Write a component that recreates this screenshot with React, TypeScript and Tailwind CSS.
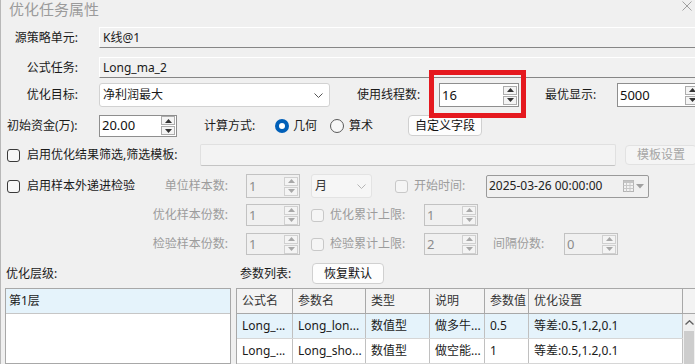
import clsx from "clsx";

const font = "font-['Noto_Sans','Noto_Sans_CJK_SC',sans-serif]";

function Tri({ up, disabled }: { up?: boolean; disabled?: boolean }) {
  return (
    <svg width="7" height="4" viewBox="0 0 7 4">
      <path
        d={up ? "M0 4 L3.5 0 L7 4 Z" : "M0 0 L3.5 4 L7 0 Z"}
        fill={disabled ? "#a8a8a8" : "#333"}
      />
    </svg>
  );
}

function Spin({
  value,
  className,
  disabled,
}: {
  value: string;
  className: string;
  disabled?: boolean;
}) {
  return (
    <div
      className={clsx(
        "flex items-center border shrink-0",
        disabled ? "border-[#c2c2c2] text-[#8c8c8c]" : "border-[#8e8e8e] bg-white text-[#111]",
        className
      )}
    >
      <span className="flex-1 pl-[2px] text-[13px] leading-none">{value}</span>
      <div className="flex flex-col gap-[1px] mr-[1px]">
        <div
          className={clsx(
            "w-[14px] h-[9px] border flex items-center justify-center",
            disabled ? "border-[#d0d0d0] bg-[#f4f4f4]" : "border-[#adadad] bg-[#f4f4f4]"
          )}
        >
          <Tri up disabled={disabled} />
        </div>
        <div
          className={clsx(
            "w-[14px] h-[9px] border flex items-center justify-center",
            disabled ? "border-[#d0d0d0] bg-[#f4f4f4]" : "border-[#adadad] bg-[#f4f4f4]"
          )}
        >
          <Tri disabled={disabled} />
        </div>
      </div>
    </div>
  );
}

function Chevron({ color }: { color: string }) {
  return (
    <svg width="9" height="5" viewBox="0 0 9 5">
      <polyline points="0.5,0.5 4.5,4.5 8.5,0.5" fill="none" stroke={color} strokeWidth="1" />
    </svg>
  );
}

function Check({ disabled }: { disabled?: boolean }) {
  return (
    <div
      className={clsx(
        "w-[13px] h-[13px] rounded-[3px] border shrink-0",
        disabled ? "border-[#c8c8c8] bg-[#f5f5f5]" : "border-[#3a3a3a] bg-[#f7f7f7]"
      )}
    />
  );
}

export default function App() {
  const cols = [
    { name: "公式名", w: "w-[56px]" },
    { name: "参数名", w: "w-[73px]" },
    { name: "类型", w: "w-[64px]" },
    { name: "说明", w: "w-[55px]" },
    { name: "参数值", w: "w-[44px]" },
    { name: "优化设置", w: "w-[154px]" },
  ];
  const rows = [
    ["Long_...", "Long_lon...", "数值型", "做多牛...", "0.5", "等差:0.5,1.2,0.1"],
    ["Long_...", "Long_sho...", "数值型", "做空能...", "1", "等差:0.5,1.2,0.1"],
  ];

  return (
    <div
      className={clsx(
        "relative w-[695px] h-[364px] overflow-hidden whitespace-nowrap bg-[#f0f0f0] border-l border-[#b8b8b8] text-[12px] text-[#1a1a1a] flex flex-col",
        font
      )}
    >
      {/* title */}
      <div className="h-[17px] flex items-center justify-between pl-[8px] pr-[3px]">
        <span className="text-[15px] text-[#9b9b9b] leading-none pt-[1px]">优化任务属性</span>
        <svg width="10" height="10" viewBox="0 0 10 10" className="-mt-[6px]">
          <path d="M0.5 0.5 L9.5 9.5 M9.5 0.5 L0.5 9.5" stroke="#a0a0a0" strokeWidth="1" />
        </svg>
      </div>

      {/* row 1 */}
      <div className="mt-[10px] h-[21px] flex items-center *:shrink-0">
        <span className="w-[77px] text-right">源策略单元:</span>
        <div className="ml-[21px] flex-1 h-full flex items-center pl-[3px] bg-[#f1f1f1] border-t border-l border-white border-b border-b-[#868686]">
          K线@1
        </div>
      </div>

      {/* row 2 */}
      <div className="mt-[9px] h-[21px] flex items-center *:shrink-0">
        <span className="w-[77px] text-right">公式任务:</span>
        <div className="ml-[21px] flex-1 h-full flex items-center pl-[3px] bg-[#f1f1f1] border-t border-l border-white border-b border-b-[#868686]">
          Long_ma_2
        </div>
      </div>

      {/* row 3 */}
      <div className="mt-[4px] h-[26px] flex items-center *:shrink-0">
        <span className="w-[77px] text-right">优化目标:</span>
        <div className="ml-[21px] w-[231px] h-[24px] flex items-center justify-between pl-[3px] pr-[6px] bg-white border border-[#d2d2d2] rounded-[3px]">
          <span>净利润最大</span>
          <Chevron color="#555" />
        </div>
        <span className="ml-[27px] w-[64px]">使用线程数:</span>
        <Spin value="16" className="ml-[18px] w-[80px] h-[24px]" />
        <span className="ml-[26px] w-[52px]">最优显示:</span>
        <Spin value="5000" className="ml-[20px] w-[84px] h-[24px]" />
      </div>

      {/* row 4 */}
      <div className="mt-[6px] h-[23px] flex items-center pl-[6px] *:shrink-0">
        <span className="w-[92px]">初始资金(万):</span>
        <Spin value="20.00" className="w-[78px] h-[22px]" />
        <span className="ml-[27px] w-[71px]">计算方式:</span>
        <div className="w-[14px] h-[14px] rounded-full bg-[#005fb8] flex items-center justify-center">
          <div className="w-[6px] h-[6px] rounded-full bg-white" />
        </div>
        <span className="ml-[4px]">几何</span>
        <div className="ml-[13px] w-[14px] h-[14px] rounded-full border border-[#5a5a5a] bg-[#f7f7f7]" />
        <span className="ml-[5px]">算术</span>
        <button className="ml-[35px] w-[74px] h-[21px] bg-[#fdfdfd] border border-[#d0d0d0] rounded-[4px] text-[12px] text-[#111] flex items-center justify-center">
          自定义字段
        </button>
      </div>

      {/* row 5 */}
      <div className="mt-[7px] h-[22px] flex items-center pl-[6px] *:shrink-0">
        <Check />
        <span className="ml-[7px] w-[173px]">启用优化结果筛选,筛选模板:</span>
        <div className="w-[416px] h-[22px] bg-[#f3f3f3] border border-[#e0e0e0] border-b-[#c4c4c4] rounded-[2px]" />
        <div className="ml-[9px] w-[72px] h-[20px] bg-[#f5f5f5] border border-[#e2e2e2] rounded-[4px] text-[#a6a6a6] flex items-center justify-center">
          模板设置
        </div>
      </div>

      {/* row 6 */}
      <div className="mt-[8px] h-[24px] flex items-center *:shrink-0">
        <div className="w-[227px] flex items-center pl-[6px]">
          <Check />
          <span className="ml-[7px]">启用样本外递进检验</span>
          <span className="ml-auto text-[#9c9c9c]">单位样本数:</span>
        </div>
        <Spin value="1" disabled className="ml-[18px] w-[54px] h-[24px]" />
        <div className="ml-[11px] w-[61px] h-[24px] flex items-center justify-between pl-[3px] pr-[5px] bg-[#f6f6f6] border border-[#e3e3e3] rounded-[3px] text-[#333]">
          <span>月</span>
          <Chevron color="#b5b5b5" />
        </div>
        <div className="ml-[23px]">
          <Check disabled />
        </div>
        <span className="ml-[6px] w-[51px] text-[#9c9c9c]">开始时间:</span>
        <div className="ml-[21px] w-[163px] h-[23px] flex items-center justify-between pl-[2px] pr-[4px] border border-[#9a9a9a] rounded-[2px] text-[#222]">
          <span>2025-03-26 00:00:00</span>
          <div className="flex items-center gap-[2px]">
            <svg width="11" height="12" viewBox="0 0 11 12">
              <rect x="0.5" y="0.5" width="10" height="11" fill="#f2f2f2" stroke="#b4b4b4" />
              <rect x="0.5" y="0.5" width="10" height="2.5" fill="#c4c4c4" />
              <path d="M0.5 5.5 H10.5 M0.5 8.5 H10.5 M3.5 3 V11.5 M7 3 V11.5" stroke="#c8c8c8" strokeWidth="1" />
            </svg>
            <svg width="8" height="5" viewBox="0 0 8 5">
              <path d="M0 0 L4 4.5 L8 0 Z" fill="#a0a0a0" />
            </svg>
          </div>
        </div>
      </div>

      {/* row 7 */}
      <div className="mt-[6px] h-[22px] flex items-center *:shrink-0">
        <div className="w-[227px] flex justify-end text-[#9c9c9c]">优化样本份数:</div>
        <Spin value="1" disabled className="ml-[18px] w-[54px] h-[22px]" />
        <div className="ml-[11px]">
          <Check disabled />
        </div>
        <span className="ml-[6px] w-[75px] text-[#9c9c9c]">优化累计上限:</span>
        <Spin value="1" disabled className="ml-[19px] w-[54px] h-[22px]" />
      </div>

      {/* row 8 */}
      <div className="mt-[7px] h-[22px] flex items-center *:shrink-0">
        <div className="w-[227px] flex justify-end text-[#9c9c9c]">检验样本份数:</div>
        <Spin value="1" disabled className="ml-[18px] w-[54px] h-[22px]" />
        <div className="ml-[11px]">
          <Check disabled />
        </div>
        <span className="ml-[6px] w-[75px] text-[#9c9c9c]">检验累计上限:</span>
        <Spin value="2" disabled className="ml-[19px] w-[54px] h-[22px]" />
        <span className="ml-[15px] w-[51px] text-[#9c9c9c]">间隔份数:</span>
        <Spin value="0" disabled className="ml-[20px] w-[54px] h-[22px]" />
      </div>

      {/* lower labels */}
      <div className="mt-[8px] h-[21px] flex items-center pl-[5px] *:shrink-0">
        <span className="w-[234px]">优化层级:</span>
        <span className="w-[51px]">参数列表:</span>
        <button className="ml-[21px] w-[72px] h-[21px] bg-[#fdfdfd] border border-[#d0d0d0] rounded-[4px] text-[12px] text-[#111] flex items-center justify-center">
          恢复默认
        </button>
      </div>

      {/* lower panels */}
      <div className="mt-[4px] flex-1 flex min-h-0">
        <div className="ml-[4px] w-[226px] shrink-0 bg-white border border-[#a8a8a8]">
          <div className="h-[25px] flex items-center pl-[3px] bg-[#e5f3fb] border-b border-[#c6c6c6]">
            第1层
          </div>
        </div>

        <div className="ml-[5px] flex-1 flex flex-col border-l border-t border-[#a8a8a8] bg-white">
          <div className="h-[25px] flex bg-[#f3f3f3] border-b border-[#a8a8a8] text-[#333]">
            {cols.map((c) => (
              <div
                key={c.name}
                className={clsx(c.w, "shrink-0 h-full flex items-center pl-[5px] border-r border-[#a8a8a8]")}
              >
                {c.name}
              </div>
            ))}
            <div className="flex-1" />
          </div>
          <div className="flex-1 flex">
            <div className="w-[446px] shrink-0 flex flex-col">
              {rows.map((r, i) => (
                <div
                  key={i}
                  className={clsx(
                    "h-[25px] flex border-b border-[#d6d6d6]",
                    i === 0 ? "bg-[#e5f3fb]" : "bg-white"
                  )}
                >
                  {r.map((v, j) => (
                    <div
                      key={j}
                      className={clsx(
                        cols[j].w,
                        "shrink-0 h-full flex items-center pl-[5px] border-r border-[#c0c0c0] overflow-hidden"
                      )}
                    >
                      {v}
                    </div>
                  ))}
                </div>
              ))}
            </div>
            <div className="flex-1 flex flex-col bg-[#f0f0f0]">
              <div className="h-[17px] flex items-center justify-center">
                <svg width="9" height="5" viewBox="0 0 9 5">
                  <polyline points="0.5,4.5 4.5,0.8 8.5,4.5" fill="none" stroke="#606060" strokeWidth="1.4" />
                </svg>
              </div>
              <div className="flex-1 mx-[1px] bg-[#cdcdcd]" />
            </div>
          </div>
        </div>
      </div>

      {/* red annotation highlight */}
      <div className="absolute left-[428px] top-[70px] w-[97px] h-[48px] border-[5px] border-[#e5191f] pointer-events-none" />
    </div>
  );
}
